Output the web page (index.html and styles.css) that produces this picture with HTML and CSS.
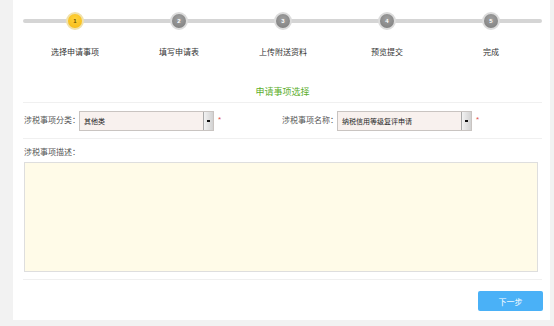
FILE: index.html
```html
<!DOCTYPE html>
<html lang="zh-CN">
<head>
    <meta charset="UTF-8">
    <meta name="viewport" content="width=device-width, initial-scale=1.0">
    <title>申请事项选择</title>
    <link rel="stylesheet" href="styles.css">
</head>
<body>

    <div class="panel">

        <div class="steps">
            <div class="step">
                <div class="dot active">1</div>
                <div class="step-label">选择申请事项</div>
            </div>
            <div class="step">
                <div class="dot">2</div>
                <div class="step-label">填写申请表</div>
            </div>
            <div class="step">
                <div class="dot">3</div>
                <div class="step-label">上传附送资料</div>
            </div>
            <div class="step">
                <div class="dot">4</div>
                <div class="step-label">预览提交</div>
            </div>
            <div class="step">
                <div class="dot">5</div>
                <div class="step-label">完成</div>
            </div>
        </div>

        <div class="title">申请事项选择</div>

        <div class="row">
            <div class="field">
                <span class="label">涉税事项分类：</span>
                <div class="select">
                    <span class="value">其他类</span>
                    <span class="arrow"></span>
                </div>
                <span class="req">*</span>
            </div>
            <div class="field">
                <span class="label">涉税事项名称：</span>
                <div class="select">
                    <span class="value">纳税信用等级复评申请</span>
                    <span class="arrow"></span>
                </div>
                <span class="req">*</span>
            </div>
        </div>

        <div class="desc">
            <div class="label">涉税事项描述：</div>
            <textarea class="area"></textarea>
        </div>

        <div class="actions">
            <button class="next">下一步</button>
        </div>

    </div>

</body>
</html>
```

FILE: styles.css
```css
body{
    margin: 0;
    background: #f2f2f2;
    font-family: "Liberation Sans", "Noto Sans CJK SC", sans-serif;
}

.panel{
    background: #ffffff;
    margin-left: 13px;
    width: 520px;
    height: 320px;
    padding: 0 7px 0 10px;
    box-sizing: content-box;
}

.steps{
    display: grid;
    grid-template-columns: repeat(5, 104px);
    position: relative;
    padding-top: 12px;
}

.steps::before{
    content: '';
    position: absolute;
    left: 0;
    right: 1px;
    top: 19px;
    height: 4px;
    border-radius: 2px;
    background: #d5d5d5;
}

.step{
    display: flex;
    flex-direction: column;
    align-items: center;
    position: relative;
}

.dot{
    width: 14px;
    height: 14px;
    border: 2px solid #dcdcdc;
    border-radius: 50%;
    background: radial-gradient(circle at 50% 35%, #a0a0a0, #7c7c7c);
    color: #fff;
    font-size: 6px;
    font-weight: bold;
    display: flex;
    align-items: center;
    justify-content: center;
}

.dot.active{
    background: radial-gradient(circle at 50% 35%, #ffd23a, #f5b914);
    border-color: #f1e2ac;
    color: #6b4e00;
}

.step-label{
    margin-top: 17px;
    font-size: 8px;
    line-height: 12px;
    color: #333;
}

.title{
    margin-top: 26px;
    text-align: center;
    font-size: 9px;
    line-height: 14px;
    color: #5cae2b;
    padding-bottom: 3px;
    border-bottom: 1px solid #f0f0f0;
    width: 519px;
}

.row{
    display: grid;
    grid-template-columns: 258px 1fr;
    padding: 8px 0 7px 1px;
    border-bottom: 1px solid #f0f0f0;
    width: 518px;
}

.field{
    display: flex;
    align-items: center;
}

.label{
    font-size: 8px;
    line-height: 12px;
    color: #555;
    white-space: nowrap;
}

.field .label{
    width: 55px;
}

.select{
    width: 133px;
    height: 18px;
    border: 1px solid #c9c4c1;
    background: #f8f1ee;
    display: flex;
    align-items: center;
    justify-content: space-between;
}

.value{
    font-size: 7px;
    color: #222;
    padding-left: 4px;
    white-space: nowrap;
}

.arrow{
    width: 9px;
    height: 18px;
    border-left: 1px solid #aaa;
    background: linear-gradient(to right, #f2f2f2, #d2d2d2);
    position: relative;
}

.arrow::after{
    content: '';
    position: absolute;
    left: 3px;
    top: 8px;
    width: 3px;
    height: 2px;
    background: #111;
}

.req{
    color: #e05050;
    font-size: 8px;
    margin-left: 4px;
    margin-top: -4px;
}

.desc{
    padding-top: 8px;
    padding-left: 1px;
    border-bottom: 1px solid #f0f0f0;
    padding-bottom: 7px;
    width: 518px;
}

.area{
    display: block;
    margin-top: 3px;
    width: 514px;
    height: 110px;
    box-sizing: border-box;
    border: 1px solid #dedede;
    background: #fffbe8;
    resize: none;
}

.actions{
    display: flex;
    justify-content: flex-end;
    padding-top: 11px;
}

.next{
    width: 65px;
    height: 20px;
    border: none;
    border-radius: 2px;
    background: #4ab1f7;
    color: #fff;
    font-size: 8px;
    font-family: "Liberation Sans", "Noto Sans CJK SC", sans-serif;
}
```
